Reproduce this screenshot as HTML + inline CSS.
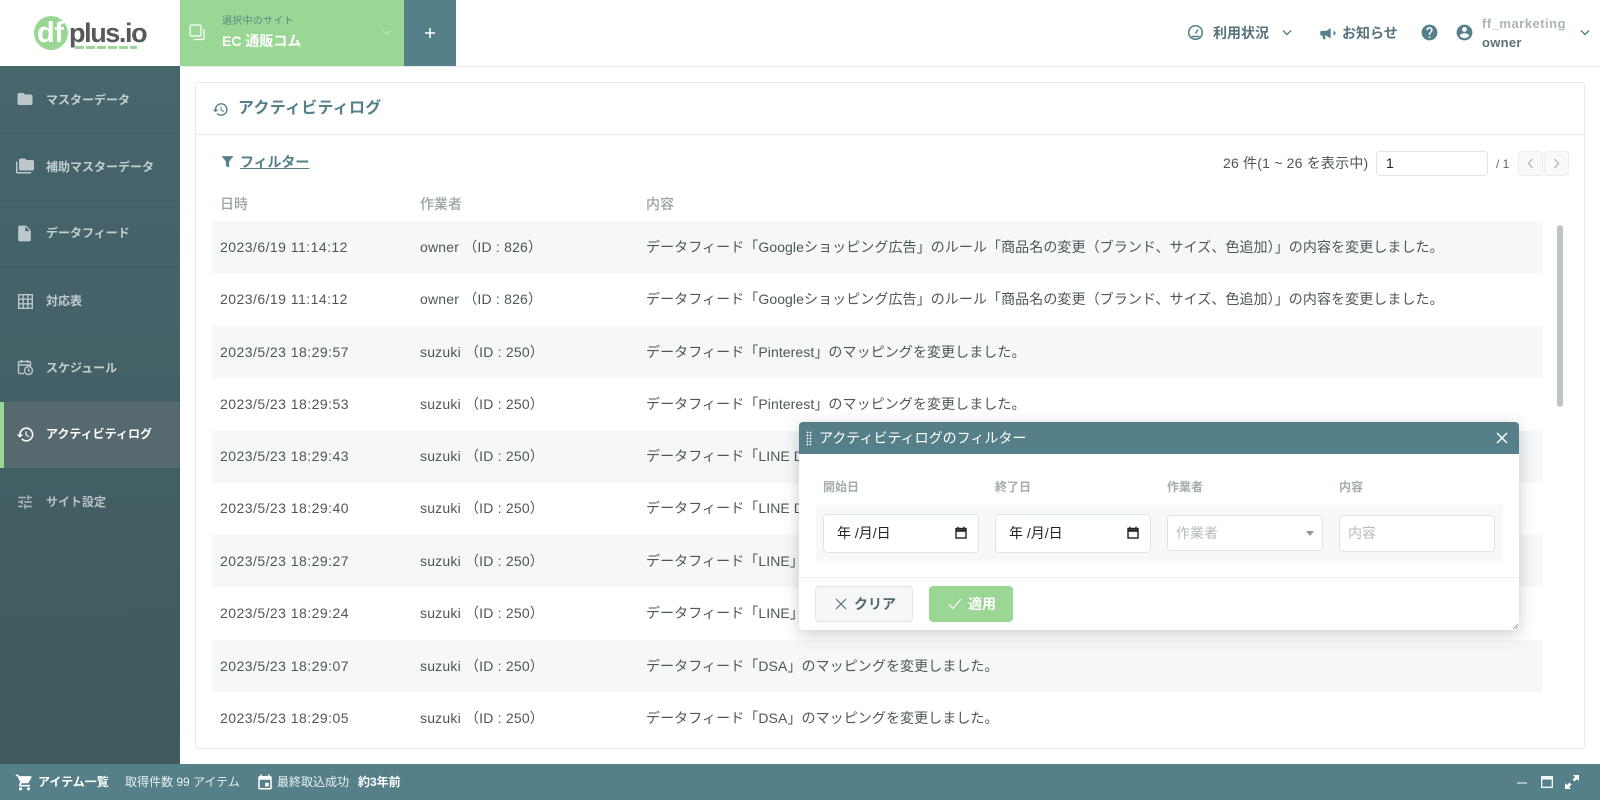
<!DOCTYPE html>
<html lang="ja"><head><meta charset="utf-8"><title>アクティビティログ</title>
<style>
*{box-sizing:border-box}
html,body{margin:0;padding:0;width:1600px;height:800px;overflow:hidden;background:#fff;font-family:"Liberation Sans","Noto Sans CJK JP",sans-serif;color:#4d5759}
#w{position:absolute;left:0;top:0;width:1600px;height:800px;overflow:hidden;filter:blur(.35px)}
.a{position:absolute}
.t{position:absolute;white-space:nowrap;line-height:20px;font-size:14px}
svg{position:absolute;display:block}
.nav{position:absolute;left:46px;font-size:12px;font-weight:700;color:#c3ced0;line-height:20px;white-space:nowrap}
.row{position:absolute;left:212px;width:1330px;height:52px}
.box{position:absolute;background:#fff;border:1px solid #dfe4e7;border-radius:4px}
.lab{position:absolute;font-size:12px;font-weight:700;color:#a3adb0;line-height:20px;top:477px;white-space:nowrap}
.ph{position:absolute;font-size:14px;color:#b4bbbe;line-height:20px;white-space:nowrap}
.th{position:absolute;white-space:nowrap;line-height:20px;font-size:14px;font-weight:500;color:#9aa4a7;top:194px}
.d{letter-spacing:.46px}.u{letter-spacing:.2px}.c{letter-spacing:.08px}
</style></head><body><div id="w">

<!-- top -->
<div class="a" style="left:0;top:66px;width:1600px;height:1px;background:#e8edf1"></div>
<div class="a" style="left:34px;top:16px;width:34px;height:34px;border-radius:50%;background:#9bd794"></div>
<div class="t" style="left:37px;top:21px;font-size:29px;line-height:25px;font-weight:700;color:#fff;letter-spacing:-.5px">df</div>
<div class="t" style="left:69px;top:18px;font-size:27px;line-height:30px;font-weight:700;color:#55595a;letter-spacing:-1.4px">plus.io</div>
<div class="a" style="left:75px;top:46px;width:62px;height:3px;background:repeating-linear-gradient(90deg,#9bd794 0 9px,transparent 9px 11px)"></div>

<div class="a" style="left:180px;top:0;width:224px;height:66px;background:#9bd794"></div>
<div class="a" style="left:404px;top:0;width:52px;height:66px;background:#55808a"></div>
<svg style="left:189px;top:24px" width="17" height="17" viewBox="0 0 17 17" fill="none" stroke="#fff" stroke-width="1.2"><rect x="1" y="1" width="11" height="11" rx="1.5"/><path d="M15 5v9a1.5 1.5 0 0 1-1.5 1.5H5"/></svg>
<div class="t" style="left:222px;top:12px;font-size:10px;color:#5c8a85;letter-spacing:.25px">選択中のサイト</div>
<div class="t" style="left:222px;top:31px;font-size:14px;font-weight:700;color:#fff">EC 通販コム</div>
<svg style="left:381px;top:29px" width="12" height="8" viewBox="0 0 12 8" fill="none" stroke="#bde6b8" stroke-width="1.3"><path d="M2 1.5l4 4 4-4"/></svg>
<svg style="left:424px;top:27px" width="12" height="12" viewBox="0 0 12 12" fill="none" stroke="#fff" stroke-width="1.5"><path d="M6 1v10M1 6h10"/></svg>

<svg style="left:1187px;top:24px" width="17" height="17" viewBox="0 0 17 17" fill="none" stroke="#55808a" stroke-width="1.5"><circle cx="8.5" cy="8.5" r="6.8"/><path d="M8.5 9.5l2.5-4M4.5 12.5h8" /></svg>
<div class="t" style="left:1213px;top:23px;font-size:14px;font-weight:700;color:#55737b">利用状況</div>
<svg style="left:1281px;top:29px" width="12" height="8" viewBox="0 0 12 8" fill="none" stroke="#55808a" stroke-width="1.4"><path d="M2 1.5l4 4 4-4"/></svg>
<svg style="left:1319px;top:23px" width="20" height="20" viewBox="0 0 24 24" fill="#55808a"><path d="M3 9.500c-1 0-1.500.6-1.500 1.500v2.500c0 .9.5 1.500 1.500 1.500h1l1 4.500h3l-1-4.500h1l6 3.500V6L9 9.500H3zm14.500 0v5.500c1.300-.5 2.500-1.500 2.500-2.750S18.800 10 17.500 9.500z"/></svg>
<div class="t" style="left:1342px;top:23px;font-size:14px;font-weight:700;color:#55737b">お知らせ</div>
<svg style="left:1420px;top:23px" width="19" height="19" viewBox="0 0 24 24" fill="#55808a"><path d="M12 2C6.480 2 2 6.480 2 12s4.480 10 10 10 10-4.480 10-10S17.520 2 12 2zm1 17h-2v-2h2v2zm2.070-7.750l-.9.920C13.450 12.900 13 13.500 13 15h-2v-.5c0-1.100.45-2.100 1.170-2.830l1.240-1.260c.37-.36.59-.86.59-1.410 0-1.100-.9-2-2-2s-2 .9-2 2H8c0-2.210 1.790-4 4-4s4 1.790 4 4c0 .880-.36 1.680-.93 2.250z"/></svg>
<svg style="left:1455px;top:23px" width="19" height="19" viewBox="0 0 24 24" fill="#55808a"><path d="M12 2C6.480 2 2 6.480 2 12s4.480 10 10 10 10-4.480 10-10S17.520 2 12 2zm0 3c1.660 0 3 1.340 3 3s-1.340 3-3 3-3-1.340-3-3 1.340-3 3-3zm0 14.200c-2.500 0-4.710-1.280-6-3.220.03-1.990 4-3.080 6-3.080 1.990 0 5.970 1.090 6 3.080-1.290 1.940-3.500 3.220-6 3.220z"/></svg>
<div class="t" style="left:1482px;top:14px;font-size:13px;font-weight:700;color:#aab5b8;letter-spacing:.5px">ff_marketing</div>
<div class="t" style="left:1482px;top:33px;font-size:13px;font-weight:700;color:#5a7279;letter-spacing:.3px">owner</div>
<svg style="left:1579px;top:29px" width="12" height="8" viewBox="0 0 12 8" fill="none" stroke="#55808a" stroke-width="1.4"><path d="M2 1.500l4 4 4-4"/></svg>

<!-- sidebar -->
<div class="a" style="left:0;top:66px;width:180px;height:698px;background:linear-gradient(180deg,#46666c 0%,#405a5e 100%)"></div>
<div class="a" style="left:0;top:133px;width:180px;height:1px;background:#435e63"></div>
<div class="a" style="left:0;top:200px;width:180px;height:1px;background:#435d62"></div>
<div class="a" style="left:0;top:267px;width:180px;height:1px;background:#435c61"></div>
<div class="a" style="left:0;top:334px;width:180px;height:1px;background:#425b60"></div>
<div class="a" style="left:0;top:402px;width:180px;height:66px;background:#55696f"></div>
<div class="a" style="left:0;top:402px;width:4px;height:66px;background:#9bd794"></div>

<svg style="left:16px;top:90px" width="18" height="18" viewBox="0 0 24 24" fill="#bcc8ca"><path d="M10 4H4c-1.100 0-2 .9-2 2v12c0 1.100.9 2 2 2h16c1.100 0 2-.9 2-2V8c0-1.100-.9-2-2-2h-8l-2-2z"/></svg>
<div class="nav" style="top:90px">マスターデータ</div>
<svg style="left:16px;top:157px" width="18" height="18" viewBox="0 0 24 24" fill="#bcc8ca"><path d="M2 6H0v5h.01L0 20c0 1.100.9 2 2 2h18v-2H2V6zm20-2h-8l-2-2H6c-1.100 0-1.990.9-1.990 2L4 16c0 1.100.9 2 2 2h16c1.100 0 2-.9 2-2V6c0-1.100-.9-2-2-2z"/></svg>
<div class="nav" style="top:157px">補助マスターデータ</div>
<svg style="left:15px;top:224px" width="19" height="19" viewBox="0 0 24 24" fill="#bcc8ca"><path d="M14 2H6c-1.100 0-2 .9-2 2v16c0 1.100.9 2 2 2h12c1.100 0 2-.9 2-2V8l-6-6zm-1 7V3.500L18.500 9H13z"/></svg>
<div class="nav" style="top:223px">データフィード</div>
<svg style="left:18px;top:294px" width="15" height="15" viewBox="0 0 16 16" fill="none" stroke="#bcc8ca" stroke-width="1.500"><path d="M.75.750h14.500v14.500H.75zM.75 5.500h14.500M.75 10.500h14.500M5.500.75v14.500M10.500.75v14.500"/></svg>
<div class="nav" style="top:291px">対応表</div>
<svg style="left:17px;top:359px" width="17" height="17" viewBox="0 0 17 17" fill="none" stroke="#bcc8ca" stroke-width="1.400"><path d="M7 14.500H2.500a1 1 0 0 1-1-1V3.500a1 1 0 0 1 1-1h10a1 1 0 0 1 1 1V7M1.500 6h12M4.500 1v3M10.500 1v3"/><circle cx="11.500" cy="11.500" r="4"/><path d="M11.500 9.500v2l1.500 1"/></svg>
<div class="nav" style="top:358px">スケジュール</div>
<svg style="left:16px;top:425px" width="19" height="19" viewBox="0 0 24 24" fill="#fff"><path d="M13 3a9 9 0 0 0-9 9H1l3.890 3.890.07.14L9 12H6c0-3.870 3.130-7 7-7s7 3.130 7 7-3.130 7-7 7c-1.930 0-3.680-.79-4.940-2.060l-1.420 1.420A8.954 8.954 0 0 0 13 21a9 9 0 0 0 0-18zm-1 5v5l4.280 2.540.72-1.210-3.500-2.080V8H12z"/></svg>
<div class="nav" style="top:424px;color:#fff">アクティビティログ</div>
<svg style="left:16px;top:493px" width="18" height="18" viewBox="0 0 24 24" fill="#aebcbe"><path d="M3 17v2h6v-2H3zM3 5v2h10V5H3zm10 16v-2h8v-2h-8v-2h-2v6h2zM7 9v2H3v2h4v2h2V9H7zm14 4v-2H11v2h10zm-6-4h2V7h4V5h-4V3h-2v6z"/></svg>
<div class="nav" style="top:492px;color:#b5c1c3">サイト設定</div>

<!-- card -->
<div class="a" style="left:195px;top:82px;width:1390px;height:667px;border:1px solid #e6ebef;border-radius:3px;background:#fff"></div>
<div class="a" style="left:196px;top:134px;width:1388px;height:1px;background:#e6ebef"></div>
<svg style="left:212px;top:101px" width="17" height="17" viewBox="0 0 24 24" fill="#55808a"><path d="M13 3a9 9 0 0 0-9 9H1l3.890 3.890.07.14L9 12H6c0-3.870 3.130-7 7-7s7 3.130 7 7-3.130 7-7 7c-1.930 0-3.680-.79-4.940-2.060l-1.420 1.420A8.954 8.954 0 0 0 13 21a9 9 0 0 0 0-18zm-1 5v5l4.280 2.540.72-1.210-3.500-2.080V8H12z"/></svg>
<div class="t" style="left:238px;top:99px;font-size:16px;font-weight:700;color:#55808a;letter-spacing:.25px">アクティビティログ</div>
<svg style="left:221px;top:155px" width="13" height="13" viewBox="0 0 12 12" fill="#55808a"><path d="M.5 1h11L7.500 6v5.500l-3-1.500V6z"/></svg>
<div class="t" style="left:240px;top:152px;font-size:14px;font-weight:700;color:#55808a;text-decoration:underline;letter-spacing:-.1px">フィルター</div>
<div class="t" style="left:1223px;top:153px;font-size:14px;color:#4d5759;letter-spacing:.2px">26 件(1 ~ 26 を表示中)</div>
<div class="box" style="left:1376px;top:151px;width:112px;height:25px"></div>
<div class="t" style="left:1386px;top:153px;font-size:14px;color:#222">1</div>
<div class="t" style="left:1496px;top:154px;font-size:12px;color:#5b6568">/ 1</div>
<div class="box" style="left:1518px;top:151px;width:25px;height:25px;background:#f8f9fa;border-color:#ebeef0"></div>
<div class="box" style="left:1544px;top:151px;width:25px;height:25px;background:#f8f9fa;border-color:#ebeef0"></div>
<svg style="left:1527px;top:158px" width="7" height="11" viewBox="0 0 7 11" fill="none" stroke="#aab2b5" stroke-width="1.200"><path d="M5.500 1l-4 4.500 4 4.500"/></svg>
<svg style="left:1553px;top:158px" width="7" height="11" viewBox="0 0 7 11" fill="none" stroke="#aab2b5" stroke-width="1.200"><path d="M1.500 1l4 4.500-4 4.500"/></svg>

<div class="th" style="left:220px">日時</div>
<div class="th" style="left:420px">作業者</div>
<div class="th" style="left:646px">内容</div>

<div class="row" style="top:221px;background:#f5f7f8"></div>
<div class="row" style="top:326px;background:#f5f7f8"></div>
<div class="row" style="top:431px;background:#f5f7f8"></div>
<div class="row" style="top:535px;background:#f5f7f8"></div>
<div class="row" style="top:640px;background:#f5f7f8"></div>
<div class="a" style="left:1557px;top:225px;width:6px;height:182px;border-radius:3px;background:#bcc6c6"></div>

<div class="t d" style="left:220px;top:237px">2023/6/19 11:14:12</div><div class="t u" style="left:420px;top:237px">owner （ID : 826）</div><div class="t c" style="left:646px;top:237px">データフィード「Googleショッピング広告」のルール「商品名の変更（ブランド、サイズ、色追加）」の内容を変更しました。</div>
<div class="t d" style="left:220px;top:289px">2023/6/19 11:14:12</div><div class="t u" style="left:420px;top:289px">owner （ID : 826）</div><div class="t c" style="left:646px;top:289px">データフィード「Googleショッピング広告」のルール「商品名の変更（ブランド、サイズ、色追加）」の内容を変更しました。</div>
<div class="t d" style="left:220px;top:342px">2023/5/23 18:29:57</div><div class="t u" style="left:420px;top:342px">suzuki （ID : 250）</div><div class="t c" style="left:646px;top:342px">データフィード「Pinterest」のマッピングを変更しました。</div>
<div class="t d" style="left:220px;top:394px">2023/5/23 18:29:53</div><div class="t u" style="left:420px;top:394px">suzuki （ID : 250）</div><div class="t c" style="left:646px;top:394px">データフィード「Pinterest」のマッピングを変更しました。</div>
<div class="t d" style="left:220px;top:446px">2023/5/23 18:29:43</div><div class="t u" style="left:420px;top:446px">suzuki （ID : 250）</div><div class="t c" style="left:646px;top:446px">データフィード「LINE DPA」のマッピングを変更しました。</div>
<div class="t d" style="left:220px;top:498px">2023/5/23 18:29:40</div><div class="t u" style="left:420px;top:498px">suzuki （ID : 250）</div><div class="t c" style="left:646px;top:498px">データフィード「LINE DPA」のマッピングを変更しました。</div>
<div class="t d" style="left:220px;top:551px">2023/5/23 18:29:27</div><div class="t u" style="left:420px;top:551px">suzuki （ID : 250）</div><div class="t c" style="left:646px;top:551px">データフィード「LINE」のマッピングを変更しました。</div>
<div class="t d" style="left:220px;top:603px">2023/5/23 18:29:24</div><div class="t u" style="left:420px;top:603px">suzuki （ID : 250）</div><div class="t c" style="left:646px;top:603px">データフィード「LINE」のマッピングを変更しました。</div>
<div class="t d" style="left:220px;top:656px">2023/5/23 18:29:07</div><div class="t u" style="left:420px;top:656px">suzuki （ID : 250）</div><div class="t c" style="left:646px;top:656px">データフィード「DSA」のマッピングを変更しました。</div>
<div class="t d" style="left:220px;top:708px">2023/5/23 18:29:05</div><div class="t u" style="left:420px;top:708px">suzuki （ID : 250）</div><div class="t c" style="left:646px;top:708px">データフィード「DSA」のマッピングを変更しました。</div>

<!-- modal -->
<div class="a" style="left:799px;top:422px;width:720px;height:208px;background:#fff;border-radius:4px;box-shadow:0 4px 16px rgba(60,75,80,.28)"></div>
<div class="a" style="left:799px;top:422px;width:720px;height:32px;background:#55808a;border-radius:4px 4px 0 0"></div>
<div class="a" style="left:806px;top:431px;width:6px;height:15px;background-image:radial-gradient(circle,#e5eeee 0 .8px,transparent 1px);background-size:3px 3px"></div>
<div class="t" style="left:819px;top:428px;font-size:14px;color:#fff;letter-spacing:0">アクティビティログのフィルター</div>
<svg style="left:1496px;top:432px" width="12" height="12" viewBox="0 0 12 12" fill="none" stroke="#fff" stroke-width="1.400"><path d="M1 1l10 10M11 1L1 11"/></svg>
<div class="lab" style="left:823px">開始日</div><div class="lab" style="left:995px">終了日</div><div class="lab" style="left:1167px">作業者</div><div class="lab" style="left:1339px">内容</div>
<div class="a" style="left:816px;top:505px;width:687px;height:56px;background:#f7f8f9"></div>
<div class="box" style="left:823px;top:514px;width:156px;height:39px"></div>
<div class="box" style="left:995px;top:514px;width:156px;height:39px"></div>
<div class="t" style="left:837px;top:523px;color:#222;font-size:14px">年 /月/日</div>
<div class="t" style="left:1009px;top:523px;color:#222;font-size:14px">年 /月/日</div>
<svg style="left:954px;top:526px" width="14" height="14" viewBox="0 0 14 14" fill="none" stroke="#222" stroke-width="1.400"><rect x="2" y="2.500" width="10" height="9.500"/><path d="M2 4.500h10" stroke-width="2.500"/><path d="M4 .8v2M10 .8v2"/></svg>
<svg style="left:1126px;top:526px" width="14" height="14" viewBox="0 0 14 14" fill="none" stroke="#222" stroke-width="1.400"><rect x="2" y="2.500" width="10" height="9.500"/><path d="M2 4.500h10" stroke-width="2.500"/><path d="M4 .8v2M10 .8v2"/></svg>
<div class="box" style="left:1167px;top:515px;width:156px;height:36px"></div>
<div class="ph" style="left:1176px;top:523px">作業者</div>
<div class="a" style="left:1306px;top:531px;width:0;height:0;border-left:4px solid transparent;border-right:4px solid transparent;border-top:5px solid #8f999c"></div>
<div class="box" style="left:1339px;top:515px;width:156px;height:37px"></div>
<div class="ph" style="left:1348px;top:523px">内容</div>
<div class="a" style="left:799px;top:577px;width:720px;height:1px;background:#eef1f2"></div>
<div class="a" style="left:815px;top:586px;width:98px;height:36px;background:#f5f7f8;border:1px solid #dfe4e7;border-radius:4px"></div>
<svg style="left:835px;top:598px" width="12" height="12" viewBox="0 0 12 12" fill="none" stroke="#55737b" stroke-width="1.200"><path d="M1 1l10 10M11 1L1 11"/></svg>
<div class="t" style="left:854px;top:594px;font-size:14px;font-weight:700;color:#4f6a72">クリア</div>
<div class="a" style="left:929px;top:586px;width:84px;height:36px;background:#9bd794;border-radius:4px"></div>
<svg style="left:948px;top:598px" width="14" height="12" viewBox="0 0 14 12" fill="none" stroke="#fff" stroke-width="1.200"><path d="M1 6.500l4 4 8-9.500"/></svg>
<div class="t" style="left:968px;top:594px;font-size:14px;font-weight:700;color:#fff">適用</div>
<svg style="left:1513px;top:624px" width="5" height="5" viewBox="0 0 5 5" stroke="#8b9598" stroke-width=".8"><path d="M5 0L0 5M5 2.500L2.500 5"/></svg>

<!-- bottom -->
<div class="a" style="left:0;top:764px;width:1600px;height:36px;background:#55808a"></div>
<svg style="left:15px;top:773px" width="19" height="19" viewBox="0 0 24 24" fill="#fff"><path d="M7 18c-1.100 0-1.990.9-1.990 2S5.900 22 7 22s2-.9 2-2-.9-2-2-2zM1 2v2h2l3.600 7.590-1.350 2.450c-.16.28-.25.610-.25.960 0 1.100.9 2 2 2h12v-2H7.420c-.14 0-.25-.11-.25-.25l.03-.12.9-1.630h7.450c.75 0 1.410-.41 1.750-1.030l3.580-6.490A1 1 0 0 0 20 4H5.210l-.94-2H1zm16 16c-1.100 0-1.990.9-1.990 2s.89 2 1.990 2 2-.9 2-2-.9-2-2-2z"/></svg>
<div class="t" style="left:38px;top:772px;font-size:12px;font-weight:700;color:#fff">アイテム一覧</div>
<div class="t" style="left:125px;top:772px;font-size:12px;color:#e8f0f1">取得件数 99 アイテム</div>
<svg style="left:256px;top:773px" width="18" height="18" viewBox="0 0 24 24" fill="#fff"><path d="M19 4h-1V2h-2v2H8V2H6v2H5c-1.100 0-2 .9-2 2v14c0 1.100.9 2 2 2h14c1.100 0 2-.9 2-2V6c0-1.100-.9-2-2-2zm0 16H5V9h14v11zM12 13h5v5h-5z"/></svg>
<div class="t" style="left:277px;top:772px;font-size:12px;color:#e8f0f1">最終取込成功</div>
<div class="t" style="left:358px;top:772px;font-size:12px;font-weight:700;color:#fff">約3年前</div>
<div class="a" style="left:1517px;top:782px;width:10px;height:2px;background:#a9c0c5"></div>
<svg style="left:1541px;top:776px" width="12" height="12" viewBox="0 0 12 12" fill="none" stroke="#fff" stroke-width="1.300"><rect x=".7" y=".7" width="10.600" height="10.600"/><path d="M.7 2.500h10.600" stroke-width="2"/></svg>
<svg style="left:1565px;top:775px" width="14" height="14" viewBox="0 0 14 14" fill="#fff"><path d="M8 0h6v6l-2-2-2.500 2.500-2-2L10 2zM6 14H0V8l2 2 2.500-2.500 2 2L4 12z"/></svg>
</div></body></html>
